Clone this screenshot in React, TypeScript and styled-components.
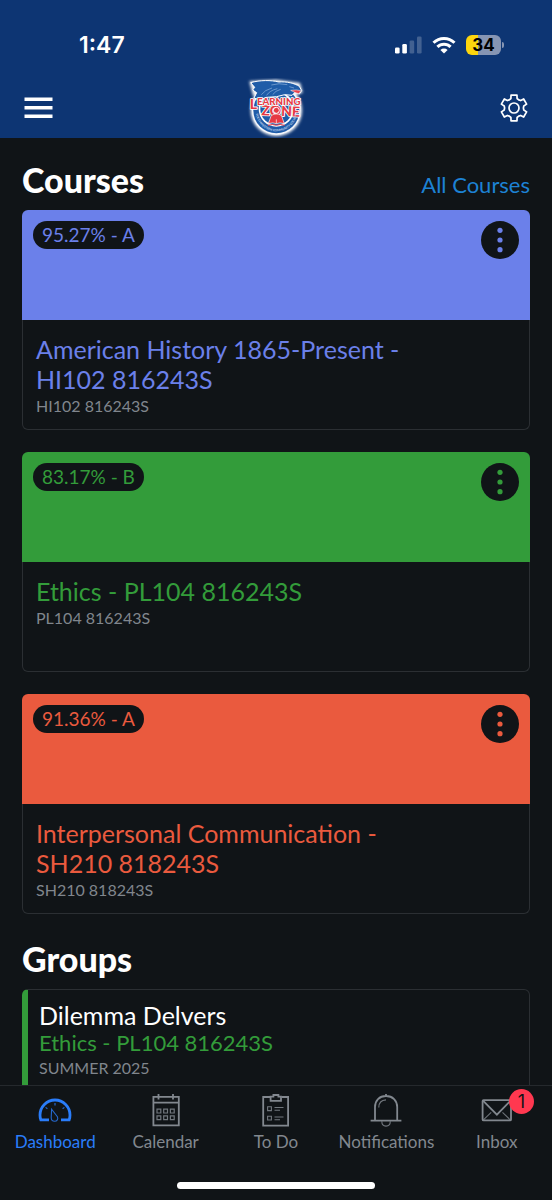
import React from "react";
import styled, { createGlobalStyle } from "styled-components";

const GlobalStyle = createGlobalStyle`
  *, *::before, *::after { box-sizing: border-box; }
  html, body { margin: 0; background: #101417; }
  body { font-family: Lato, "Liberation Sans", sans-serif; color: #fff; }
  h1, h2, h3, p, ul { margin: 0; padding: 0; }
  button { font: inherit; color: inherit; border: 0; padding: 0; background: none; cursor: pointer; }
  a { color: inherit; text-decoration: none; }
  svg { display: block; }
`;

const Screen = styled.div`
  display: flex;
  flex-direction: column;
  height: 100vh;
  background: #101417;
`;

const TopBar = styled.header`
  flex: none;
  background: #0d3573;
`;

const StatusBar = styled.div`
  display: flex;
  align-items: center;
  justify-content: space-between;
  padding: 32px 48px 0 79px;
  height: 58px;
`;

const Clock = styled.time`
  font: 600 23px/26px Inter, "Liberation Sans", sans-serif;
`;

const StatusIcons = styled.div`
  display: flex;
  align-items: center;
  gap: 10px;
`;

const Battery = styled.div`
  display: flex;
  align-items: center;
  gap: 1px;
`;

const BatteryBody = styled.span`
  width: 35px;
  height: 20px;
  border-radius: 6px;
  background: linear-gradient(90deg, #fdd60d 34%, #8695b3 34%);
  color: #000;
  font: 700 17px/20px Inter, "Liberation Sans", sans-serif;
  text-align: center;
`;

const BatteryTip = styled.span`
  width: 2px;
  height: 6px;
  border-radius: 0 2px 2px 0;
  background: #8695b3;
`;

const NavBar = styled.div`
  display: grid;
  grid-template-columns: 1fr auto 1fr;
  align-items: center;
  padding: 20px 24px 0;
`;

const IconButton = styled.button<{ $end?: boolean }>`
  display: flex;
  justify-self: ${(p) => (p.$end ? "end" : "start")};
`;

const Content = styled.main`
  flex: 1;
  min-height: 0;
  display: flex;
  flex-direction: column;
  gap: 3px;
  overflow-y: auto;
  scrollbar-width: none;
  padding: 0 22px;
`;

const SectionHead = styled.div`
  display: flex;
  align-items: baseline;
  justify-content: space-between;
  padding: 21px 0 6px;
`;

const SectionTitle = styled.h2`
  font-size: 34px;
  line-height: 42px;
  font-weight: 900;
`;

const AllLink = styled.a`
  font-size: 22px;
  line-height: 28px;
  color: #1d82d4;
`;

const CardList = styled.ul`
  display: flex;
  flex-direction: column;
  gap: 22px;
  list-style: none;
`;

const CourseCard = styled.li<{ $color: string }>`
  color: ${(p) => p.$color};
`;

const CourseBanner = styled.div`
  display: flex;
  align-items: flex-start;
  justify-content: space-between;
  height: 110px;
  padding: 11px;
  border-radius: 6px 6px 0 0;
  background: currentColor;
`;

const GradePill = styled.span<{ $color: string }>`
  padding: 0 9px;
  border-radius: 14px;
  background: #101417;
  color: ${(p) => p.$color};
  font-size: 19px;
  line-height: 28px;
`;

const MoreButton = styled.button<{ $color: string }>`
  display: flex;
  align-items: center;
  justify-content: center;
  width: 38px;
  height: 38px;
  border-radius: 50%;
  background: #101417;
  color: ${(p) => p.$color};
`;

const CourseBody = styled.div`
  min-height: 110px;
  padding: 14px 13px 10px;
  border: 1px solid #2b2f33;
  border-top: 0;
  border-radius: 0 0 6px 6px;
`;

const CourseName = styled.h3`
  max-width: 80%;
  font-size: 25px;
  line-height: 30px;
  font-weight: 400;
`;

const Caption = styled.p`
  font-size: 16px;
  line-height: 24px;
  color: #80868d;
`;

const GroupCard = styled.a`
  display: block;
  border: 1px solid #2b2f33;
  border-left: 6px solid #339c3a;
  border-radius: 6px;
  padding: 10px 11px;
`;

const GroupName = styled.h3`
  font-size: 25px;
  line-height: 30px;
  font-weight: 400;
`;

const GroupCourse = styled.p`
  font-size: 22px;
  line-height: 26px;
  color: #339c3a;
`;

const TabBar = styled.nav`
  flex: none;
  display: grid;
  grid-template-columns: repeat(5, 1fr);
  border-top: 1px solid #25292d;
  padding: 6px 0 29px;
`;

const Tab = styled.a<{ $active?: boolean }>`
  display: flex;
  flex-direction: column;
  align-items: center;
  gap: 3px;
  font-size: 17px;
  line-height: 22px;
  color: ${(p) => (p.$active ? "#2a7dfa" : "#82888f")};
`;

const TabIcon = styled.span`
  position: relative;
`;

const Badge = styled.span`
  position: absolute;
  top: -3px;
  right: -19px;
  width: 25px;
  height: 25px;
  border-radius: 50%;
  background: #ff3850;
  color: #101417;
  font: 400 18px/25px Inter, "Liberation Sans", sans-serif;
  text-align: center;
`;

const HomeArea = styled.div`
  flex: none;
  display: flex;
  justify-content: center;
  padding-bottom: 11px;
`;

const HomeIndicator = styled.div`
  width: 36%;
  height: 7px;
  border-radius: 4px;
  background: #fff;
`;

const SignalIcon = () => (
  <svg width="27" height="18" viewBox="0 0 27 18" fill="#fff" aria-label="Signal">
    <rect x="0" y="11.5" width="4.6" height="6" rx="1.3" />
    <rect x="7.3" y="8" width="4.6" height="9.5" rx="1.3" />
    <rect x="14.6" y="4.5" width="4.6" height="13" rx="1.3" opacity=".22" />
    <rect x="22" y="0.5" width="4.6" height="17" rx="1.3" opacity=".22" />
  </svg>
);

const WifiIcon = () => (
  <svg width="24" height="18" viewBox="0 0 24 18" aria-label="Wi-Fi">
    <g fill="none" stroke="#fff" strokeWidth="3">
      <path d="M1.5 6.8a15 15 0 0 1 21 0" />
      <path d="M5.4 10.9a9.4 9.4 0 0 1 13.2 0" />
    </g>
    <path d="M8.4 13.9a5.3 5.3 0 0 1 7.2 0L12 17.6Z" fill="#fff" />
  </svg>
);

const MenuIcon = () => (
  <svg width="29" height="22" viewBox="0 0 29 22" fill="#fff">
    <path d="M0.5 0.5h28v3.5h-28zM0.5 9h28v3.5h-28zM0.5 17.5h28v3.5h-28z" />
  </svg>
);

const gearPath = (() => {
  const point = (radius: number, degrees: number) => {
    const a = (degrees * Math.PI) / 180;
    return `${(14 + radius * Math.cos(a)).toFixed(2)} ${(14 + radius * Math.sin(a)).toFixed(2)}`;
  };
  const corners: string[] = [];
  for (let i = 0; i < 6; i++) {
    const mid = i * 60 - 90;
    corners.push(point(10, mid - 18), point(13.2, mid - 13), point(13.2, mid + 13), point(10, mid + 18), point(9.4, mid + 30));
  }
  return `M${corners.join("L")}Z`;
})();

const GearIcon = () => (
  <svg width="28" height="28" viewBox="0 0 28 28" fill="none" stroke="#fff" strokeWidth="1.7" strokeLinejoin="round">
    <path d={gearPath} />
    <circle cx="14" cy="14" r="5" />
  </svg>
);

const Logo = () => (
  <svg width="60" height="60" viewBox="0 0 180 180" role="img" aria-label="Learning Zone">
    <defs>
      <filter id="glow" x="-20%" y="-20%" width="140%" height="140%">
        <feGaussianBlur stdDeviation="4" />
      </filter>
      <path id="ring" d="M29 98A62 62 0 0 0 153 98" />
    </defs>
    <g fill="#fff" filter="url(#glow)">
      <circle cx="91" cy="97" r="77" />
      <path d="M10 10L90 5 162 15 170 44 90 66 22 54Z" />
    </g>
    <circle cx="91" cy="97" r="73" fill="#f4f6fb" />
    <circle cx="91" cy="97" r="69" fill="#1f5ca8" />
    <circle cx="91" cy="93" r="53" fill="#fff" />
    <circle cx="91" cy="93" r="48" fill="#1f5ca8" />
    <path
      d="M14 14C42 6 76 6 98 12C122 10 146 16 160 25L167 38 160 48 148 42 138 52 116 50 92 56 62 58 42 66 24 60 32 44 20 36 26 28Z"
      fill="#1f5ca8" stroke="#fff" strokeWidth="3" strokeLinejoin="round"
    />
    <g fill="none" stroke="#8fb3de" strokeWidth="2">
      <path d="M76 21Q98 14 124 20M46 50Q56 36 78 30M62 52Q70 38 94 32M80 50Q88 38 104 34M130 26l14 4" />
    </g>
    <path d="M134 37Q152 34 165 38L158 47 146 43Z" fill="#e9424d" stroke="#fff" strokeWidth="1.5" />
    <g fill="#e63a45" stroke="#fff" strokeWidth="5" strokeLinejoin="round" paintOrder="stroke" fontFamily="Lato, sans-serif" fontWeight="900">
      <text x="46" y="112" fontSize="42" transform="rotate(2 46 112)">ZONE</text>
      <text x="11" y="82" fontSize="29"><tspan fontSize="42" dy="12">L</tspan><tspan dy="-12">EARNING</tspan></text>
    </g>
    <circle cx="91" cy="97" r="9" fill="#e63a45" stroke="#fff" strokeWidth="3" />
    <path d="M73 120Q75 108 91 108T109 120L115 137Q101 132 91 137Q81 132 67 137Z" fill="#e63a45" stroke="#fff" strokeWidth="2" />
    <path d="M91 124v13" fill="none" stroke="#fff" strokeWidth="2" />
    <path d="M66 142Q80 137 91 142Q102 137 116 142" fill="none" stroke="#e63a45" strokeWidth="3" />
    <text fill="#c3d6ee" fontFamily="Lato, sans-serif" fontWeight="700" fontSize="9">
      <textPath href="#ring" startOffset="50%" textAnchor="middle">SOUTHWESTERN COMMUNITY COLLEGE</textPath>
    </text>
  </svg>
);

const MoreIcon = () => (
  <svg width="6" height="26" viewBox="0 0 6 26" fill="currentColor">
    <circle cx="3" cy="3.3" r="2.6" />
    <circle cx="3" cy="13" r="2.6" />
    <circle cx="3" cy="22.7" r="2.6" />
  </svg>
);

const TabSvg = ({ children }: { children: React.ReactNode }) => (
  <svg width="36" height="36" viewBox="0 0 36 36" fill="none" stroke="currentColor" strokeWidth="1.8">
    {children}
  </svg>
);

const DashboardIcon = () => (
  <TabSvg>
    <path d="M12 27.8H3.8C3.2 26.2 3 24.6 3 23a15 15 0 0 1 30 0c0 1.6-.2 3.2-.8 4.8H24" strokeWidth="2.8" />
    <path d="M14.6 17.2l-.4 8.3c0 2.5 1.7 3.8 3.5 3.8 2.3 0 3.8-2.3 2.7-4.6Z" strokeWidth="1.1" opacity=".8" />
    <path d="M18 11v2.4M8.6 15.4l1.8 1.4M27.4 15.4l-1.8 1.4" strokeWidth="1.2" opacity=".8" />
  </TabSvg>
);

const CalendarIcon = () => (
  <TabSvg>
    <path d="M10.5 2v5.4M25 2v5.4M5.4 10.6h25.4" />
    <path d="M5.4 4.8h25.4v28.6H5.4z" />
    <path d="M9 17.2h3.8V21H9zM15.7 17.2h3.8V21h-3.8zM22.4 17.2h3.8V21h-3.8zM9 23.8h3.8v3.8H9zM15.7 23.8h3.8v3.8h-3.8zM22.4 23.8h3.8v3.8h-3.8z" strokeWidth="1.2" opacity=".85" />
  </TabSvg>
);

const TodoIcon = () => (
  <TabSvg>
    <path d="M12 5H5.2v28.6h24.9V5h-6.5" />
    <path d="M12.6 8.8V4.6h2.8V3h5v1.6H23v4.2Z" />
    <path d="M9.6 14.8h3.8v3.8H9.6zM9.6 24.2h3.8V28H9.6zM16.5 15.5h9M16.5 18.2h5.5M16.5 25h9M16.5 27.7h5.5" strokeWidth="1.1" opacity=".85" />
  </TabSvg>
);

const BellIcon = () => (
  <TabSvg>
    <path d="M2.6 28.7h30.8M7 28.5V15C7 8.4 11.4 4 18 4s11.2 4.4 11.2 11v13.5M18 2v2" />
    <path d="M13.8 29.2c0 3 1.8 4.9 4.2 4.9s4.3-1.9 4.3-4.9M10.8 15.5c0-4.5 2.6-7.4 7.2-7.6" strokeWidth="1.1" opacity=".85" />
  </TabSvg>
);

const InboxIcon = () => (
  <TabSvg>
    <rect x="3.6" y="8.1" width="28.4" height="20.3" rx="1" />
    <path d="M4.2 8.8L17.9 22.6 31.4 8.8" />
    <path d="M4.4 27.8l7.8-7.4M31.2 27.8l-7.7-7.4" strokeWidth="1.1" opacity=".8" />
  </TabSvg>
);

const courses = [
  { grade: "95.27% - A", name: "American History 1865-Present - HI102 816243S", code: "HI102 816243S", color: "#6b80ea" },
  { grade: "83.17% - B", name: "Ethics - PL104 816243S", code: "PL104 816243S", color: "#339c3a" },
  { grade: "91.36% - A", name: "Interpersonal Communication - SH210 818243S", code: "SH210 818243S", color: "#ea5a3e" },
];

const tabs = [
  { label: "Dashboard", Icon: DashboardIcon, active: true },
  { label: "Calendar", Icon: CalendarIcon },
  { label: "To Do", Icon: TodoIcon },
  { label: "Notifications", Icon: BellIcon },
  { label: "Inbox", Icon: InboxIcon, count: 1 },
];

export default function App() {
  return (
    <Screen>
      <GlobalStyle />
      <TopBar>
        <StatusBar>
          <Clock>1:47</Clock>
          <StatusIcons>
            <SignalIcon />
            <WifiIcon />
            <Battery>
              <BatteryBody>34</BatteryBody>
              <BatteryTip />
            </Battery>
          </StatusIcons>
        </StatusBar>
        <NavBar>
          <IconButton aria-label="Menu"><MenuIcon /></IconButton>
          <Logo />
          <IconButton $end aria-label="Settings"><GearIcon /></IconButton>
        </NavBar>
      </TopBar>

      <Content>
        <SectionHead>
          <SectionTitle>Courses</SectionTitle>
          <AllLink href="#courses">All Courses</AllLink>
        </SectionHead>
        <CardList>
          {courses.map((c) => (
            <CourseCard key={c.code} $color={c.color}>
              <CourseBanner>
                <GradePill $color={c.color}>{c.grade}</GradePill>
                <MoreButton $color={c.color} aria-label={`Options for ${c.name}`}><MoreIcon /></MoreButton>
              </CourseBanner>
              <CourseBody>
                <CourseName>{c.name}</CourseName>
                <Caption>{c.code}</Caption>
              </CourseBody>
            </CourseCard>
          ))}
        </CardList>

        <SectionHead>
          <SectionTitle>Groups</SectionTitle>
        </SectionHead>
        <GroupCard href="#group">
          <GroupName>Dilemma Delvers</GroupName>
          <GroupCourse>Ethics - PL104 816243S</GroupCourse>
          <Caption>SUMMER 2025</Caption>
        </GroupCard>
      </Content>

      <TabBar>
        {tabs.map(({ label, Icon, active, count }) => (
          <Tab key={label} href={`#${label}`} $active={active}>
            <TabIcon>
              <Icon />
              {count && <Badge>{count}</Badge>}
            </TabIcon>
            {label}
          </Tab>
        ))}
      </TabBar>
      <HomeArea>
        <HomeIndicator />
      </HomeArea>
    </Screen>
  );
}
